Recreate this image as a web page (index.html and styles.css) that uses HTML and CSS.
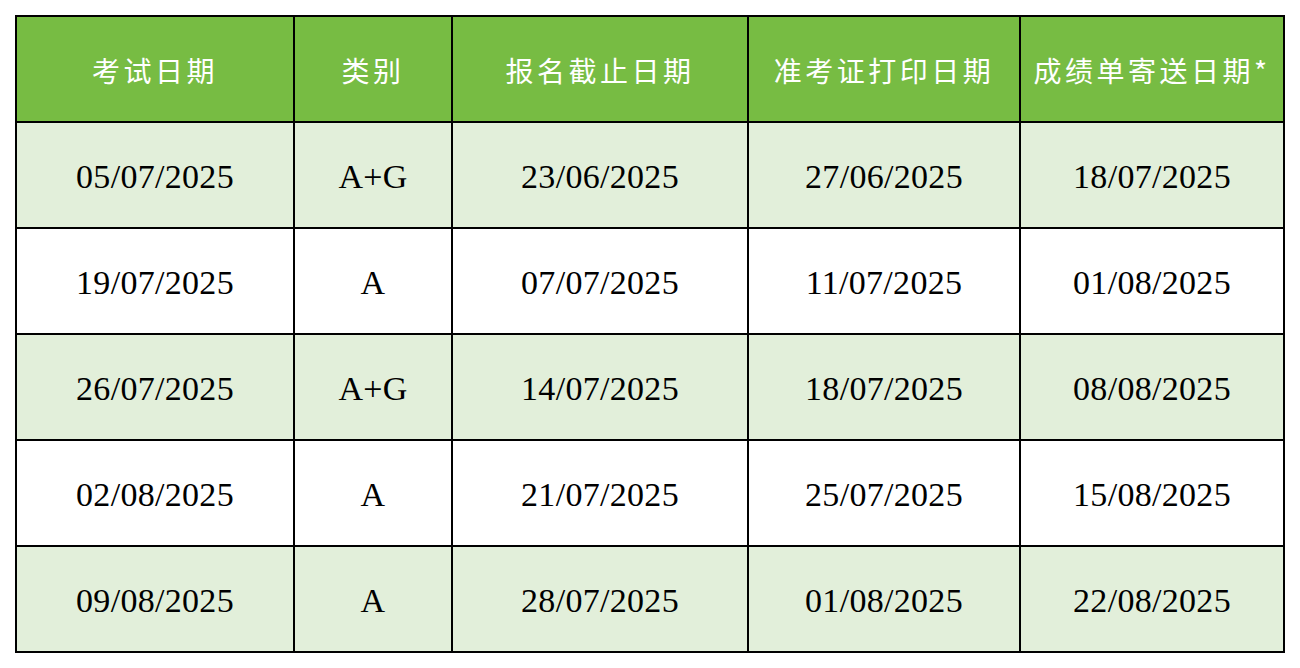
FILE: index.html
```html
<!DOCTYPE html>
<html lang="zh">
<head>
<meta charset="utf-8">
<title>考试日期</title>
<link rel="stylesheet" href="styles.css">
</head>
<body>
<table class="schedule">
  <colgroup>
    <col class="c1"><col class="c2"><col class="c3"><col class="c4"><col class="c5">
  </colgroup>
  <thead>
    <tr><th>考试日期</th><th>类别</th><th>报名截止日期</th><th>准考证打印日期</th><th>成绩单寄送日期*</th></tr>
  </thead>
  <tbody>
    <tr class="alt"><td>05/07/2025</td><td>A+G</td><td>23/06/2025</td><td>27/06/2025</td><td>18/07/2025</td></tr>
    <tr><td>19/07/2025</td><td>A</td><td>07/07/2025</td><td>11/07/2025</td><td>01/08/2025</td></tr>
    <tr class="alt"><td>26/07/2025</td><td>A+G</td><td>14/07/2025</td><td>18/07/2025</td><td>08/08/2025</td></tr>
    <tr><td>02/08/2025</td><td>A</td><td>21/07/2025</td><td>25/07/2025</td><td>15/08/2025</td></tr>
    <tr class="alt"><td>09/08/2025</td><td>A</td><td>28/07/2025</td><td>01/08/2025</td><td>22/08/2025</td></tr>
  </tbody>
</table>
</body>
</html>
```
FILE: styles.css
```css
html, body { margin: 0; padding: 0; background: #fff; }
body { padding: 15px 0 0 15px; }
.schedule {
  border-collapse: collapse;
  table-layout: fixed;
  width: 1268px;
}
.c1 { width: 278px; }
.c2 { width: 158px; }
.c3 { width: 296px; }
.c4 { width: 272px; }
.c5 { width: 264px; }
.schedule th, .schedule td {
  border: 2px solid #000;
  height: 106px;
  padding: 0;
  text-align: center;
  vertical-align: middle;
  box-sizing: border-box;
}
.schedule th {
  background: #77bc43;
  color: #fff;
  font-family: "Noto Sans CJK SC", sans-serif;
  font-weight: 400;
  font-size: 28px;
  letter-spacing: 3.5px;
  padding-top: 2px;
}
.schedule td {
  font-family: "Liberation Serif", serif;
  font-size: 34px;
  letter-spacing: 0.3px;
  color: #000;
  padding-top: 3px;
}
.schedule tr.alt td { background: #e2efda; }
```
